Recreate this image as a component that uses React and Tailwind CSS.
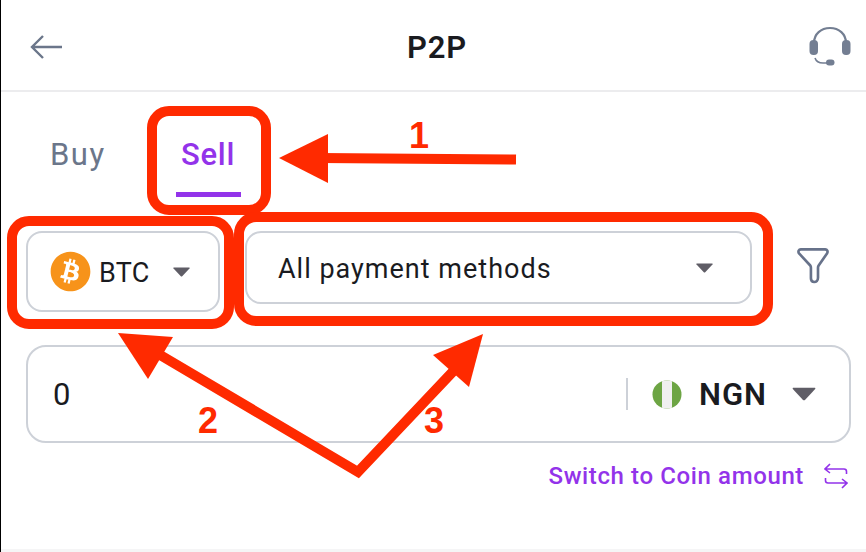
import React from "react";
import { FaBitcoin } from "react-icons/fa";

const font = { fontFamily: '"Roboto", "Liberation Sans", sans-serif' };
const mark = { fontFamily: '"Liberation Sans", sans-serif' };

function Caret({ w = 17, h = 10 }) {
  return (
    <svg width={w} height={h} viewBox="0 0 17 10" className="shrink-0">
      <path d="M1 .5h15c.6 0 .8.5.5.9L9.2 9.2c-.4.4-1 .4-1.4 0L.5 1.400C.2 1 .4.5 1 .5z" fill="#5f5d66" />
    </svg>
  );
}

export default function App() {
  return (
    <div className="relative w-[866px] h-[552px] overflow-hidden bg-white border-l border-black text-[#1a1b1f]" style={font}>
      <header className="relative h-[92px] border-b-2 border-[#ececee] flex items-center justify-between pl-[28px] pr-[14px]">
        <svg width="36" height="26" viewBox="0 0 36 26" className="mt-[3px]" fill="none" stroke="#6b768a" strokeWidth="2.4">
          <path d="M33 13H3M14 2L3 13l11 11" />
        </svg>
        <div className="absolute left-[406px] top-[28px] text-[31px] leading-[40px] font-semibold tracking-[0.8px]">P2P</div>
        <svg width="44" height="42" viewBox="0 0 44 42" className="mt-[3px]" fill="none">
          <path d="M6 20V17C6 8 13 2 22 2s16 6 16 15v3" stroke="#737e92" strokeWidth="2.2" />
          <rect x="1.500" y="14" width="8.500" height="15" rx="4" fill="#737e92" />
          <rect x="34" y="14" width="8.500" height="15" rx="4" fill="#737e92" />
          <path d="M7 32c1 3 3 5 8 5h5" stroke="#737e92" strokeWidth="1.600" />
          <rect x="18" y="33.500" width="8.500" height="6" rx="3" fill="#737e92" />
        </svg>
      </header>

      <div className="h-[107px] flex pl-[49px]">
        <div className="pt-[43px] text-[31px] leading-[40px] text-[#6b768a] tracking-[1.500px]">Buy</div>
        <div className="ml-[70px] relative w-[65px] flex flex-col items-center">
          <div className="pt-[43px] text-[31px] leading-[40px] text-[#9333ea] font-medium tracking-[0.8px] whitespace-nowrap">Sell</div>
          <div className="mt-[17px] h-[5px] w-[65px] bg-[#9333ea]" />
        </div>
      </div>

      <div className="mt-[32px] flex items-start pl-[25px]">
        <div className="w-[194px] h-[81px] rounded-[16px] border-2 border-[#cdd1d8] flex items-center pl-[22px]">
          <span className="relative w-[41px] h-[41px] shrink-0 rounded-full bg-white">
            <FaBitcoin size={41} color="#f7931a" className="absolute inset-0" />
          </span>
          <span className="ml-[8px] mt-[2px] text-[27px] leading-[36px] tracking-[0.3px]">BTC</span>
          <span className="ml-[23px]"><Caret /></span>
        </div>
        <div className="ml-[25px] w-[507px] h-[73px] rounded-[16px] border-2 border-[#cdd1d8] flex items-center justify-between pl-[31px] pr-[37px]">
          <span className="mt-[2px] text-[27px] leading-[36px] tracking-[1px] whitespace-nowrap">All payment methods</span>
          <Caret />
        </div>
        <svg width="34" height="37" viewBox="0 0 36 38" className="ml-[44px] mt-[16px]" fill="none" stroke="#67728a" strokeWidth="2.800" strokeLinejoin="round">
          <path d="M5 2h26c2 0 3 2 2 4L24 19c-.5.7-.7 1.400-.7 2.300V32c0 3-2 4.500-4 4.500s-3.500-1-3.500-4V21.300c0-.9-.2-1.600-.7-2.300L3 6C2 4 3 2 5 2z" />
        </svg>
      </div>

      <div className="mt-[33px] ml-[25px] w-[825px] h-[98px] rounded-[20px] border-2 border-[#cdd1d8] flex items-center pl-[25px]">
        <span className="mt-[2px] text-[31px] leading-[40px]">0</span>
        <div className="ml-auto h-[32px] w-[2px] bg-[#cdd1d8]" />
        <svg width="30" height="29" viewBox="0 0 30 29" className="ml-[24px] shrink-0">
          <defs>
            <clipPath id="ngn"><ellipse cx="15" cy="14.500" rx="14.500" ry="14" /></clipPath>
          </defs>
          <g clipPath="url(#ngn)">
            <rect width="30" height="29" fill="#6da544" />
            <rect x="10" width="10" height="29" fill="#f0f0f0" />
          </g>
        </svg>
        <span className="ml-[17px] mt-[2px] text-[31px] leading-[40px] font-semibold tracking-[1px]">NGN</span>
        <span className="ml-[25px] mr-[33px]"><Caret w={24} h={14} /></span>
      </div>

      <div className="mt-[16px] flex items-center justify-end pr-[18px]">
        <span className="text-[24px] leading-[34px] font-medium text-[#9333ea] tracking-[0.62px] whitespace-nowrap">Switch to Coin amount</span>
        <svg width="24" height="26" viewBox="0 0 24 26" className="ml-[20px]" fill="none" stroke="#9333ea" strokeWidth="1.600">
          <path d="M1 6h19c1.500 0 2.500 1 2.500 2.500V11M6 1L1 6l5 4M23 20H4c-1.500 0-2.500-1-2.500-2.500V15M18 25l5-5-5-4" />
        </svg>
      </div>

      <div className="absolute left-0 right-0 bottom-0 h-[3px] bg-[#f5f5f6]" />

      {/* annotations */}
      <div className="absolute left-[146px] top-[106px] w-[124px] h-[109px] rounded-[22px] border-[10px] border-[#ff2a00]" />
      <div className="absolute left-[6px] top-[216px] w-[227px] h-[113px] rounded-[22px] border-[10px] border-[#ff2a00]" />
      <div className="absolute left-[233px] top-[212px] w-[539px] h-[114px] rounded-[22px] border-[10px] border-[#ff2a00]" />
      <svg className="absolute left-[-1px] top-0 pointer-events-none" width="866" height="552" viewBox="0 0 866 552" fill="none">
        <path d="M516 159.500L320 158" stroke="#ff2a00" strokeWidth="10" />
        <path d="M279 158l49-24v49z" fill="#ff2a00" />
        <path d="M150 349L358 472L462 362" stroke="#ff2a00" strokeWidth="10" />
        <path d="M118 333l55 4-25 42z" fill="#ff2a00" />
        <path d="M483 334l-50 21 36 32z" fill="#ff2a00" />
      </svg>
      <span className="absolute left-[408px] top-[115px] text-[36px] leading-[42px] font-bold text-[#ff2a00]" style={mark}>1</span>
      <span className="absolute left-[197px] top-[400px] text-[36px] leading-[42px] font-bold text-[#ff2a00]" style={mark}>2</span>
      <span className="absolute left-[423px] top-[400px] text-[36px] leading-[42px] font-bold text-[#ff2a00]" style={mark}>3</span>
    </div>
  );
}
